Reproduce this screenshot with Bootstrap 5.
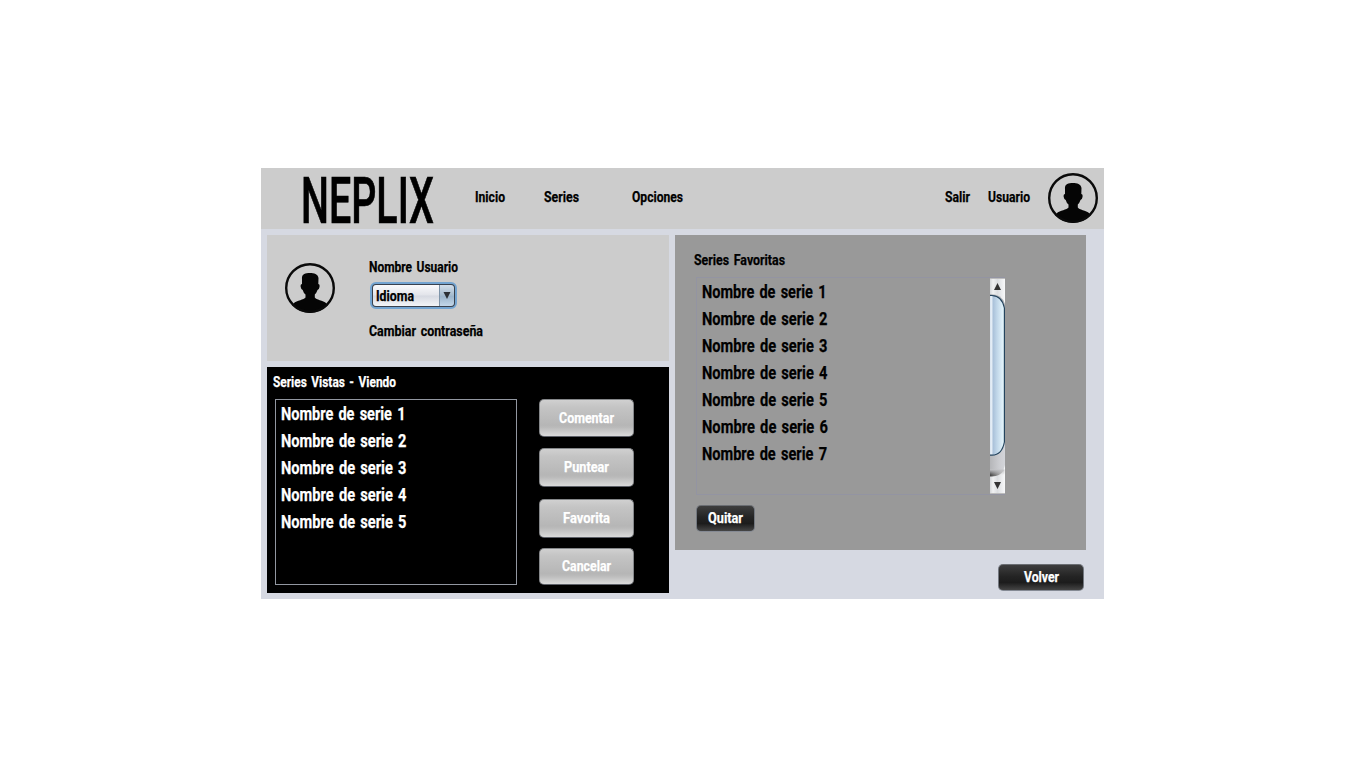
<!DOCTYPE html>
<html lang="es">
<head>
<meta charset="utf-8">
<meta name="viewport" content="width=device-width, initial-scale=1">
<title>Neplix</title>
<link href="https://cdn.jsdelivr.net/npm/bootstrap@5.3.0/dist/css/bootstrap.min.css" rel="stylesheet">
<style>
body{background:#fff;color:#000;font:bold 15.5px/20px Roboto,"Liberation Sans",sans-serif;word-spacing:2px;padding:168px 0 0 261px}
.app-window{width:843px;height:431px;background:#d6d9e2}
.top-bar{height:61px;background:#ccc;padding:0 6px 0 40px}
.top-bar .nav-text{padding-bottom:4px}
.brand{font-size:64.5px;line-height:60px;font-weight:500;padding-top:4px;width:133px;-webkit-text-stroke:.7px #000}
.fit{display:inline-block;white-space:nowrap;transform-origin:0 50%}
.nav-text,.profile,.watched,.favs,.volver{-webkit-text-stroke:.25px currentColor}
.gap-a{margin-left:41px}.gap-b{margin-left:39px}.gap-c{margin-left:53px}.gap-d{margin-left:18px}
.avatar{width:50px;height:50px;display:block;flex:none}
.top-bar .avatar{margin:0 0 1.5px 18px}
.work{padding:6px;gap:6px}
.left-col{width:402px;gap:6px}
.profile{height:126px;background:#ccc;padding:22px 18px 0;gap:34px}
.profile .avatar{margin-top:6px}
.combo{width:87px;height:27px;margin:5px 0 12px 1px;border:2px solid #73a4d1;border-radius:6px;overflow:hidden;background:#39414d;padding:1px}
.combo-face{width:66px;background:linear-gradient(#fafafc,#e2e4ea 48%,#d6d9e1 52%,#f3f5f8);border-radius:3px 0 0 3px;padding:1px 0 0 3px}
.combo-arrow{flex:1;background:linear-gradient(#d4dfea,#a6bccf 48%,#9cb5cc 55%,#c3d7e9);border-left:1px solid #7d93a8;border-radius:0 3px 3px 0}
.watched{height:226px;background:#000;color:#fff;padding:4.5px 6px 0}
.list-box{width:242px;height:186px;border:1px solid #9297a1;margin:7.5px 0 0 2px;padding:0 5px}
.series{font-size:18.3px;line-height:27px}
.series div{height:27px}
.actions{margin:7.5px 0 0 22px}
.tool{width:95px;padding:0 0 1px;border:1px solid #85878a;border-bottom-color:#5d6068;border-radius:5px;background:linear-gradient(#d0d0d0,#c4c4c4 20%,#b6b6b6 70%,#bababa 76%,#dadada);color:#fff;font:inherit}
.h-38{height:38px}.h-39{height:39px}.h-37{height:37px}
.puntear{margin-top:11px}.favorita{margin-top:12px}.cancelar{margin-top:10px}
.dark-btn{background:linear-gradient(#3e3e3e,#242424 45%,#1c1c1c 70%,#454545);border-color:#6b6e73 #737880 #858a94}
.favs{width:411px;height:315px;background:#999;padding:14.5px 19px 0}
.fav-list{width:309px;height:218px;margin:7.5px 0 0 2px;border:1px solid #9394a2;border-right:0;padding:0 0 0 5px}
.fav-wrap{position:relative}
.scroll{position:absolute;left:296px;top:1px;width:15px;height:216px}
.quitar{width:59px;height:27px;margin:10px 0 0 2px}
.volver{width:86px;height:27px;margin:14px 0 0 323px}
</style>
</head>
<body>
<svg width="0" height="0" class="position-absolute" aria-hidden="true">
 <symbol id="person" viewBox="0 0 50 50">
  <path fill="#050505" d="M17 16C16.500 11 20 10 25 10C29 10 33 11 33.500 15L33.300 21Q35 21 34.500 24Q34 27 32.500 27Q31.500 30 29.800 31.500V34.500C31 37 38 37 41.500 40.500L43 42A24.500 24.500 0 0 1 7 42L8.500 40.500C12 37 19 37 20.500 34.500V31.500Q18.500 30 17.700 27Q16.200 27 15.700 24Q15.200 21 17 21Z"/>
  <circle cx="25" cy="25" r="23.800" fill="none" stroke="#0a0a0a" stroke-width="2.400"/>
 </symbol>
</svg>
<main class="app-window">
 <header class="top-bar d-flex align-items-center">
  <div class="brand"><span class="fit" data-w="133">NEPLIX</span></div>
  <nav class="nav-text d-flex flex-grow-1">
   <span class="gap-a"><span class="fit" data-w="30">Inicio</span></span>
   <span class="gap-b"><span class="fit" data-w="35">Series</span></span>
   <span class="gap-c"><span class="fit" data-w="51">Opciones</span></span>
   <span class="ms-auto"><span class="fit" data-w="25">Salir</span></span>
   <span class="gap-d"><span class="fit" data-w="42">Usuario</span></span>
  </nav>
  <svg class="avatar"><use href="#person"/></svg>
 </header>
 <div class="work d-flex">
  <div class="left-col d-flex flex-column">
   <section class="profile d-flex">
    <svg class="avatar"><use href="#person"/></svg>
    <div>
     <div><span class="fit" data-w="89">Nombre Usuario</span></div>
     <div class="combo d-flex">
      <div class="combo-face"><span class="fit" data-w="38">Idioma</span></div>
      <div class="combo-arrow d-flex align-items-center justify-content-center"><svg width="8" height="7"><path d="M.5 0h7L4 7z" fill="#2c3035"/></svg></div>
     </div>
     <div><span class="fit" data-w="114">Cambiar contraseña</span></div>
    </div>
   </section>
   <section class="watched">
    <div><span class="fit" data-w="123">Series Vistas - Viendo</span></div>
    <div class="d-flex">
     <div class="list-box series">
      <div><span class="fit" data-w="124.5">Nombre de serie 1</span></div>
      <div><span class="fit" data-w="125.5">Nombre de serie 2</span></div>
      <div><span class="fit" data-w="125.5">Nombre de serie 3</span></div>
      <div><span class="fit" data-w="125.5">Nombre de serie 4</span></div>
      <div><span class="fit" data-w="125.5">Nombre de serie 5</span></div>
     </div>
     <div class="actions">
      <button class="tool h-38 d-block"><span class="fit" data-w="55">Comentar</span></button>
      <button class="tool h-39 d-block puntear"><span class="fit" data-w="45">Puntear</span></button>
      <button class="tool h-39 d-block favorita"><span class="fit" data-w="47">Favorita</span></button>
      <button class="tool h-37 d-block cancelar"><span class="fit" data-w="49">Cancelar</span></button>
     </div>
    </div>
   </section>
  </div>
  <div>
   <section class="favs">
    <div><span class="fit" data-w="91">Series Favoritas</span></div>
    <div class="fav-wrap">
     <div class="fav-list series">
      <div><span class="fit" data-w="124.5">Nombre de serie 1</span></div>
      <div><span class="fit" data-w="125.5">Nombre de serie 2</span></div>
      <div><span class="fit" data-w="125.5">Nombre de serie 3</span></div>
      <div><span class="fit" data-w="125.5">Nombre de serie 4</span></div>
      <div><span class="fit" data-w="125.5">Nombre de serie 5</span></div>
      <div><span class="fit" data-w="126">Nombre de serie 6</span></div>
      <div><span class="fit" data-w="125">Nombre de serie 7</span></div>
     </div>
     <svg class="scroll" viewBox="0 0 15 216">
      <defs>
       <linearGradient id="cap"><stop offset="0" stop-color="#d4d6d9"/><stop offset=".2" stop-color="#f0f1f2"/><stop offset=".5" stop-color="#dcdee1"/><stop offset="1" stop-color="#f8f9fa"/></linearGradient>
       <linearGradient id="track"><stop offset="0" stop-color="#b5b6b9"/><stop offset=".6" stop-color="#cbccd0"/><stop offset="1" stop-color="#d3d5da"/></linearGradient>
       <linearGradient id="thumb"><stop offset="0" stop-color="#c5d5e6"/><stop offset=".15" stop-color="#eaf1f8"/><stop offset=".28" stop-color="#abc2da"/><stop offset=".5" stop-color="#bfd5e8"/><stop offset="1" stop-color="#eafaff"/></linearGradient>
       <linearGradient id="shade"><stop offset="0" stop-color="#444"/><stop offset=".35" stop-color="#777"/><stop offset="1" stop-color="#ccc"/></linearGradient>
       <linearGradient id="fade" x2="0" y2="1"><stop offset="0" stop-color="#c2c3c6"/><stop offset="1" stop-color="#c2c3c6" stop-opacity="0"/></linearGradient>
      </defs>
      <path fill="url(#cap)" d="M0 0h15v216H0z"/>
      <path fill="#bbb" d="M0 0h15v1H0zM0 215h15v1H0z"/>
      <path fill="#85898e" opacity=".6" d="M0 16Q12 16 15 26V34H0z"/>
      <path fill="url(#track)" d="M0 160H15V187Q13 198 2 198H0z"/>
      <path fill="url(#shade)" d="M0 192H14Q10 198.500 2 198.500H0z"/>
      <path fill="url(#fade)" d="M0 191.500H14.500V197H0z"/>
      <path fill="url(#thumb)" stroke="#24445e" stroke-width="1.200" d="M-1 17.500H2Q12 18 14.400 30V164Q12 177 2 177.200H-1z"/>
      <path fill="#333" d="M4 12 7.500 5 11 12zM4 204h7l-3.500 7z"/>
     </svg>
    </div>
    <button class="tool dark-btn quitar d-block"><span class="fit" data-w="35">Quitar</span></button>
   </section>
   <button class="tool dark-btn volver d-block"><span class="fit" data-w="35">Volver</span></button>
  </div>
 </div>
</main>
<script src="https://cdn.jsdelivr.net/npm/bootstrap@5.3.0/dist/js/bootstrap.bundle.min.js"></script>
<script>
// condense each label to its design width
document.querySelectorAll('.fit').forEach(function (el) {
  var natural = el.getBoundingClientRect().width, w = +el.dataset.w;
  el.style.marginRight = (w - natural) + 'px';
  el.style.transform = 'scaleX(' + w / natural + ')';
});
</script>
</body>
</html>
